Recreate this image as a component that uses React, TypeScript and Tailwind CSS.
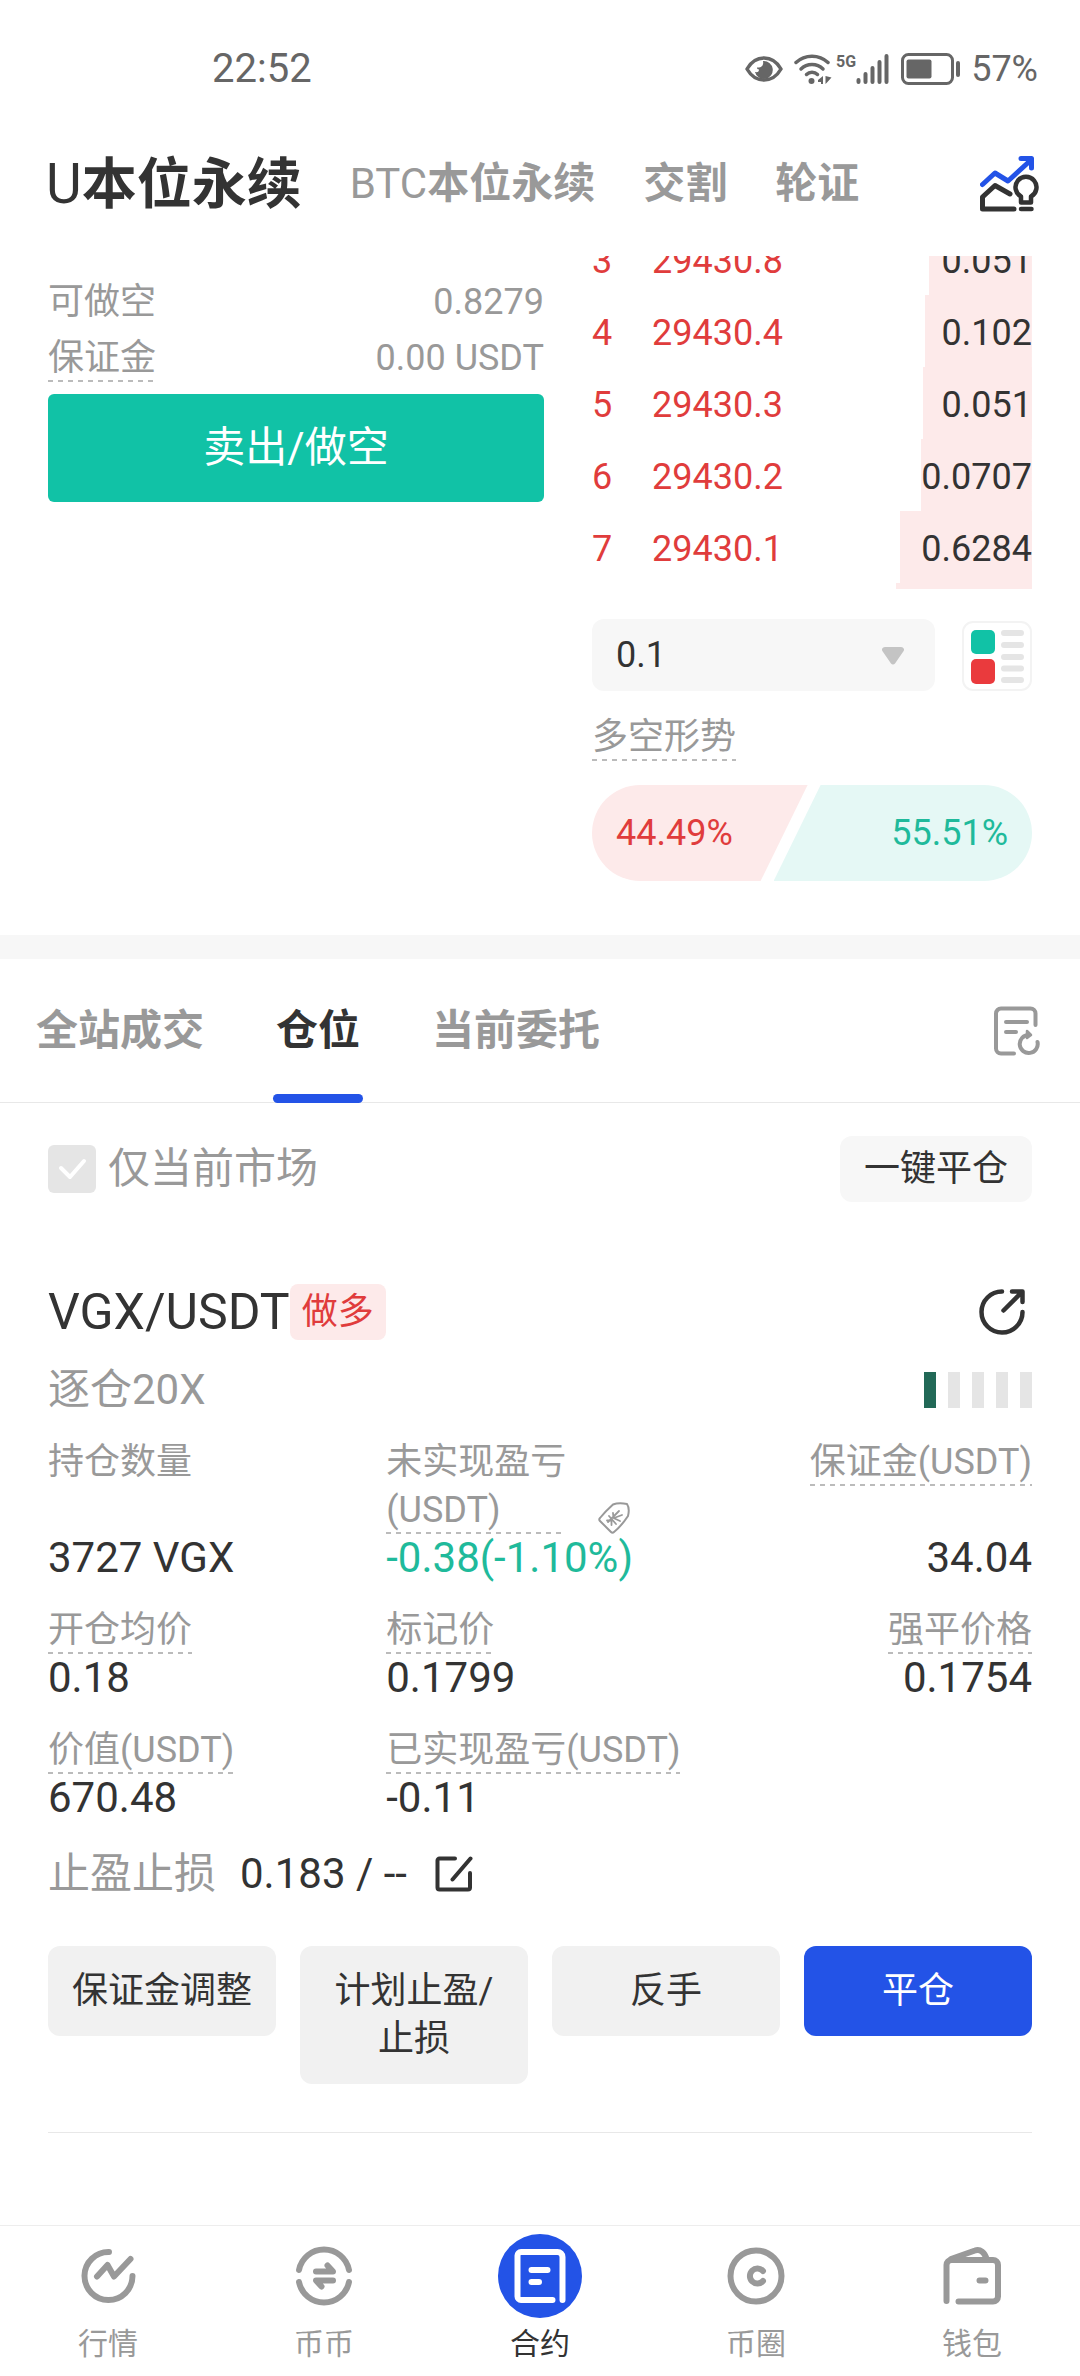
import { useState } from 'react'
import type { ReactNode } from 'react'
import clsx from 'clsx'

interface Ask {
  level: number
  price: string
  amount: string
  depth: number
}

const asks: Ask[] = [
  { level: 3, price: '29430.8', amount: '0.051', depth: 23.4 },
  { level: 4, price: '29430.4', amount: '0.102', depth: 24.3 },
  { level: 5, price: '29430.3', amount: '0.051', depth: 24.8 },
  { level: 6, price: '29430.2', amount: '0.0707', depth: 25.2 },
  { level: 7, price: '29430.1', amount: '0.6284', depth: 30 },
]

const markets = ['交割', '轮证']
const listTabs = ['全站成交', '仓位', '当前委托']

function StatusBar() {
  return (
    <div className="flex h-[138px] items-center justify-between pr-[42px] pl-[212px] text-[#666]">
      <span className="text-[40px] leading-none">22:52</span>
      <div className="flex items-center">
        <svg className="h-[26px] w-[38px]" viewBox="0 0 38 26" fill="none">
          <path d="M2 13C6 6 12 2 19 2s13 4 17 11c-4 7-10 11-17 11S6 20 2 13z" stroke="currentColor" strokeWidth="3.5" strokeLinejoin="round" />
          <path d="M18 5a9 9 0 1 1-8 11c3 .5 4-.5 4-2.500-1.500 0-2-1-2-2 4 .5 7-2 6-6.500z" fill="currentColor" />
        </svg>
        <svg className="ml-[11px] h-[30px] w-[38px]" viewBox="0 0 38 30" fill="none">
          <g stroke="currentColor" strokeWidth="3.5" strokeLinecap="round">
            <path d="M2 8.500c9-8.500 23-8.500 32 0" />
            <path d="M7 15c6-6 16-6 22 0" />
            <path d="M12.500 20.500c3-3 8-3 11 0" />
          </g>
          <circle cx="17.500" cy="27" r="3" fill="currentColor" />
          <path d="M29 22v8h-2v-2h-3v-2zM31.500 30v-8l6 1.500-4.500 5z" fill="currentColor" />
        </svg>
        <span className="ml-1 h-[30px] text-[16px] leading-4 font-bold">5G</span>
        <svg className="h-[30px] w-[33px]" viewBox="0 0 33 30" stroke="currentColor" strokeWidth="4" strokeLinecap="round">
          <path d="M2.500 26v2M9.500 20v8M16.500 14v14M23.500 8v20M30.500 2v26" />
        </svg>
        <svg className="ml-3 h-8 w-[60px]" viewBox="0 0 60 32" fill="none">
          <rect x="1.500" y="1.500" width="50" height="29" rx="6" stroke="currentColor" strokeWidth="3" />
          <rect x="5.500" y="6.500" width="25" height="19" rx="2" fill="currentColor" />
          <rect x="55" y="8" width="4" height="16" rx="2" fill="currentColor" />
        </svg>
        <span className="ml-[10px] text-4xl leading-none">57%</span>
      </div>
    </div>
  )
}

function MarketHeader() {
  return (
    <header className="flex h-[118px] items-center justify-between pr-10 pb-[26px] pl-[46px]">
      <nav className="flex items-center gap-12 text-[42px] leading-[60px] font-bold text-[#999]">
        <button className="text-[55px] text-[#333]"><span className="font-normal">U</span>本位永续</button>
        <button><span className="font-normal">BTC</span>本位永续</button>
        {markets.map((m) => <button key={m}>{m}</button>)}
      </nav>
      <button aria-label="策略">
        <svg className="h-14 w-[60px]" viewBox="0 0 60 56" fill="none" strokeWidth="5" strokeLinecap="round" strokeLinejoin="round">
          <path d="M2.500 28.500L15 17l13 8L51 4M41 2.500h10.500V12" stroke="#2353e7" />
          <path d="M30 38L15 29.500 2.500 41v12H34" stroke="#333" />
          <path d="M41 46.500v-6a10.500 10.500 0 1 1 10 0v6zM41 53h10.500" stroke="#333" strokeWidth="4.500" />
        </svg>
      </button>
    </header>
  )
}

function Dashed({ children }: { children: ReactNode }) {
  return (
    <span className="inline-block bg-[repeating-linear-gradient(90deg,#bbb_0_5px,transparent_5px_10px)] bg-[length:100%_2px] bg-bottom bg-no-repeat">
      {children}
    </span>
  )
}

function SellPanel() {
  return (
    <div className="pt-[18px] text-4xl leading-[48px] text-[#999]">
      <div className="flex h-14 items-center justify-between"><span>可做空</span><span>0.8279</span></div>
      <div className="flex h-14 items-center justify-between"><Dashed>保证金</Dashed><span>0.00 USDT</span></div>
      <button className="mt-2 h-[108px] w-full rounded-md bg-[#11c2a6] text-[42px] text-white">卖出/做空</button>
    </div>
  )
}

function OrderBook() {
  return (
    <div className="min-w-0">
      <div className="h-[333px] overflow-hidden">
        <table className="-mt-[33px] w-full text-4xl leading-none">
          <tbody>
            {asks.map((a) => (
              <tr key={a.level} className="h-[72px] bg-[linear-gradient(#fdeaea,#fdeaea)] bg-right bg-no-repeat" style={{ backgroundSize: `${a.depth}% 100%` }}>
                <td className="w-[60px] p-0 pt-1 text-[#e03c3c]">{a.level}</td>
                <td className="p-0 pt-1 text-[#e03c3c]">{a.price}</td>
                <td className="p-0 pt-1 text-right text-[#333]">{a.amount}</td>
              </tr>
            ))}
            <tr className="h-[72px] bg-[linear-gradient(#fdeaea,#fdeaea)] bg-[length:31%_100%] bg-right bg-no-repeat"><td colSpan={3} /></tr>
          </tbody>
        </table>
      </div>

      <div className="mt-[30px] flex items-end justify-between">
        <div className="relative w-[78%]">
          <select aria-label="深度" className="h-[72px] w-full appearance-none rounded-xl bg-[#f7f7f7] px-6 text-4xl leading-[48px] text-[#333]">
            <option>0.1</option>
            <option>1</option>
            <option>10</option>
          </select>
          <svg className="pointer-events-none absolute top-7 right-[31px] h-[18px] w-[22px]" viewBox="0 0 22 18" fill="#c4c4c4">
            <path d="M3 0h16c2.500 0 4 2.500 2.300 4.500l-8.300 12c-1 1.200-3 1.200-4 0l-8.300-12C-1 2.500.5 0 3 0z" />
          </svg>
        </div>
        <button aria-label="盘口样式">
          <svg className="h-[70px] w-[70px]" viewBox="0 0 70 70" fill="none">
            <rect x="1" y="1" width="68" height="68" rx="10" stroke="#f3f3f3" strokeWidth="2" />
            <rect x="9" y="9" width="24" height="24" rx="5" fill="#11c2a6" />
            <rect x="9" y="38" width="24" height="25" rx="5" fill="#ea3a3d" />
            <path d="M42 12h17M42 24h17M42 36h17M42 47.500h17M42 59h17" stroke="#e5e5e5" strokeWidth="6" strokeLinecap="round" />
          </svg>
        </button>
      </div>

      <div className="mt-[22px] h-12 text-4xl leading-[48px] text-[#999]"><Dashed>多空形势</Dashed></div>
      <div className="mt-6 flex h-24 items-center overflow-hidden rounded-full text-4xl">
        <div className="flex h-full w-[49%] items-center bg-[#fdeaea] pl-6 text-[#e03c3c] [clip-path:polygon(0_0,100%_0,calc(100%-47px)_100%,0_100%)]">44.49%</div>
        <div className="-ml-[34px] flex h-full flex-1 items-center justify-end bg-[#e5f8f5] pr-6 text-[#1fba9b] [clip-path:polygon(47px_0,100%_0,100%_100%,0_100%)]">55.51%</div>
      </div>
    </div>
  )
}

function ListTabs() {
  const [active, setActive] = useState('仓位')
  return (
    <div className="flex h-36 items-center justify-between border-b border-[#e8e8e8] pr-10">
      <div className="flex h-full">
        {listTabs.map((t) => (
          <button key={t} onClick={() => setActive(t)}
            className={clsx('relative px-9 text-[42px] font-bold', active === t ? 'text-[#333]' : 'text-[#999]')}>
            {t}
            {active === t && <span className="absolute -bottom-px left-1/2 h-[9px] w-[90px] -translate-x-1/2 rounded-full bg-[#2353e7]" />}
          </button>
        ))}
      </div>
      <button aria-label="历史委托">
        <svg className="h-[50px] w-[46px]" viewBox="0 0 46 50" fill="none" stroke="#999" strokeWidth="4" strokeLinecap="round" strokeLinejoin="round">
          <path d="M41.500 19V7.500a5 5 0 0 0-5-5H7a5 5 0 0 0-5 5v35a5 5 0 0 0 5 5h13M12 16h21M12 26h10" />
          <path d="M43.500 36a9 9 0 1 1-9-7" />
          <path d="M33 25l4 4-4 3z" fill="#999" strokeWidth="2.500" />
        </svg>
      </button>
    </div>
  )
}

function Stat({ label, value, underline = true, align = 'left' }: {
  label: string
  value: string
  underline?: boolean
  align?: 'left' | 'right'
}) {
  return (
    <div className={clsx('flex flex-col justify-between', align === 'right' && 'text-right')}>
      <dt className="flex flex-col text-4xl leading-[48px] text-[#999]">
        <span className={align === 'right' ? 'self-end' : 'self-start'}>
          {underline ? <Dashed>{label}</Dashed> : label}
        </span>
      </dt>
      <dd className="text-[42px] leading-[48px] text-[#333]">{value}</dd>
    </div>
  )
}

function TagIcon() {
  return (
    <svg className="h-8 w-8" viewBox="0 0 32 32" fill="none" stroke="#999" strokeWidth="2" strokeLinecap="round" strokeLinejoin="round">
      <path d="M15 2.500C19 1 24 1 29 2c2 3 2 8 1 12-4 6-9 12-14 16-1 1-2 1-3 0L2 19c-1-1-1-2 0-3 4-5 8-9 13-13.500z" />
      <path d="M10 20l11-11M11 14l7 8M9 18.500h4.500V23M15 11l.5 5 6.500 3M16 16l8-3" strokeWidth="1.800" />
    </svg>
  )
}

function Position() {
  return (
    <section className="mx-12 border-b border-[#e8e8e8] pb-12">
      <div className="flex h-[60px] items-center justify-between">
        <div className="flex items-center">
          <h2 className="text-[50px] leading-[60px] font-normal text-[#333]">VGX/USDT</h2>
          <span className="rounded-lg bg-[#fdeaea] px-3 text-4xl leading-[56px] text-[#e03c3c]">做多</span>
        </div>
        <button aria-label="分享" className="pr-[7px]">
          <svg className="h-[46px] w-[46px]" viewBox="0 0 46 46" fill="none" stroke="#333" strokeWidth="4.500" strokeLinecap="round" strokeLinejoin="round">
            <path d="M23 2.500A20.500 20.500 0 1 0 43.500 23M24.500 21.500L42 4M33 2.500h10.500V13" />
          </svg>
        </button>
      </div>

      <div className="mt-6 flex h-12 items-center justify-between">
        <span className="text-[42px] leading-[48px] text-[#999]">逐仓20X</span>
        <div className="flex h-9 gap-3">
          {[0, 1, 2, 3, 4].map((i) => <span key={i} className={clsx('w-3', i === 0 ? 'bg-[#226957]' : 'bg-[#e5e5e5]')} />)}
        </div>
      </div>

      <dl className="mt-6 grid grid-cols-[11fr_12fr_9fr] gap-y-6">
        <Stat label="持仓数量" value="3727 VGX" underline={false} />
        <div className="flex flex-col">
          <dt className="flex items-end gap-8 text-4xl leading-[48px] text-[#999]">
            <Dashed>未实现盈亏<br />(USDT)</Dashed>
            <TagIcon />
          </dt>
          <dd className="text-[42px] leading-[48px] whitespace-nowrap text-[#1fba9b]">-0.38(-1.10%)</dd>
        </div>
        <Stat label="保证金(USDT)" value="34.04" align="right" />
        <Stat label="开仓均价" value="0.18" />
        <Stat label="标记价" value="0.1799" />
        <Stat label="强平价格" value="0.1754" align="right" />
        <Stat label="价值(USDT)" value="670.48" />
        <Stat label="已实现盈亏(USDT)" value="-0.11" />
      </dl>

      <div className="mt-7 flex h-12 items-center text-[42px] leading-[48px]">
        <span className="text-[#999]">止盈止损</span>
        <span className="ml-6 text-[#333]">0.183 / --</span>
        <button aria-label="编辑止盈止损" className="ml-7">
          <svg className="h-9 w-[38px]" viewBox="0 0 38 36" fill="none" stroke="#333" strokeWidth="4" strokeLinecap="round" strokeLinejoin="round">
            <path d="M20 2.500H4.500a2 2 0 0 0-2 2v27a2 2 0 0 0 2 2H33a2 2 0 0 0 2-2V17M17.500 23.500L35.500 2.500" />
          </svg>
        </button>
      </div>

      <div className="mt-12 grid grid-cols-4 items-start gap-6 text-4xl leading-[48px] text-[#333]">
        <button className="rounded-xl bg-[#f1f1f1] px-5 py-[21px]">保证金调整</button>
        <button className="rounded-xl bg-[#f1f1f1] px-5 py-[21px]">计划止盈/止损</button>
        <button className="rounded-xl bg-[#f1f1f1] px-5 py-[21px]">反手</button>
        <button className="rounded-xl bg-[#2353e7] px-5 py-[21px] text-white">平仓</button>
      </div>
    </section>
  )
}

const navItems = [
  {
    label: '行情',
    icon: <path d="M43 18a24 24 0 1 0 23.500 24M31 42.500L41.500 31l6.500 11.500L64.500 25" />,
  },
  {
    label: '币币',
    icon: <path d="M17 36a25.500 25.500 0 0 1 50 0M17 48a25.500 25.500 0 0 0 50 0M34 37.500h17L45.500 31.500M51 46.500H34L39.500 52.500" />,
  },
  {
    label: '合约',
    icon: <path d="M54.500 66H23a3.500 3.500 0 0 1-3.500-3.500v-41A3.500 3.500 0 0 1 23 18h36.500A5 5 0 0 1 64.500 23v43M33.500 36h16M33.500 48h7.500" />,
  },
  {
    label: '币圈',
    icon: <><circle cx="42" cy="42" r="25.500" /><path d="M49 37a7.500 7.500 0 1 0 0 10" /></>,
  },
  {
    label: '钱包',
    icon: <path d="M16.500 67V31a5 5 0 0 1 5-5H63a5 5 0 0 1 5 5v31.500a5 5 0 0 1-5 5H28.500M21 25l24-8.500c5-2 10 2 11.500 8.500M49.500 46.500h6" />,
  },
]

function BottomNav() {
  return (
    <nav className="mt-auto grid grid-cols-5 border-t border-[#ededed] bg-white pt-2 pb-3">
      {navItems.map((n) => {
        const active = n.label === '合约'
        return (
          <a key={n.label} href="#" className={clsx('flex flex-col items-center gap-1.5 text-[30px] leading-10', active ? 'text-[#333]' : 'text-[#999]')}>
            <span className={clsx('rounded-full', active && 'bg-[#2353e7] text-white')}>
              <svg className="h-[84px] w-[84px]" viewBox="0 0 84 84" fill="none" stroke="currentColor" strokeWidth="6" strokeLinecap="round" strokeLinejoin="round">{n.icon}</svg>
            </span>
            {n.label}
          </a>
        )
      })}
    </nav>
  )
}

export default function App() {
  const [onlyCurrent, setOnlyCurrent] = useState(true)

  return (
    <div className="flex min-h-screen flex-col bg-white font-['Roboto','Noto_Sans_CJK_SC',sans-serif] text-[#333]">
      <StatusBar />
      <MarketHeader />

      <main>
        <div className="grid grid-cols-[62fr_55fr] gap-12 border-b-[24px] border-[#f7f7f7] px-12 pb-[54px]">
          <SellPanel />
          <OrderBook />
        </div>

        <ListTabs />

        <div className="mt-[33px] mb-20 flex items-center justify-between px-12">
          <label className="relative flex items-center gap-3 text-[42px] leading-[48px] text-[#999]">
            <input type="checkbox" checked={onlyCurrent} onChange={() => setOnlyCurrent(!onlyCurrent)}
              className="h-12 w-12 appearance-none rounded-md bg-[#e5e5e5]" />
            {onlyCurrent && (
              <svg className="pointer-events-none absolute top-0 left-0 h-12 w-12" viewBox="0 0 48 48" fill="none" stroke="#fff" strokeWidth="4" strokeLinecap="round" strokeLinejoin="round">
                <path d="M13 23l9 9 14-16" />
              </svg>
            )}
            仅当前市场
          </label>
          <button className="rounded-xl bg-[#f7f7f7] px-6 text-4xl leading-[66px]">一键平仓</button>
        </div>

        <Position />
      </main>

      <BottomNav />
    </div>
  )
}
